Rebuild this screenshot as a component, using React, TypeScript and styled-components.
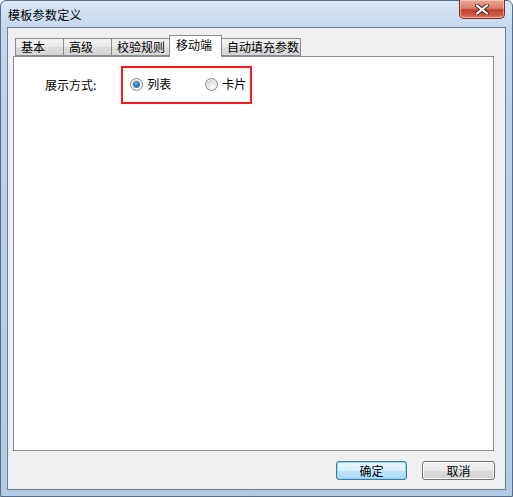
import React, { useState } from "react";
import styled, { createGlobalStyle } from "styled-components";

const GlobalStyle = createGlobalStyle`
  html, body {
    margin: 0;
    padding: 0;
    background: #ffffff;
  }
  body {
    font-family: "Noto Sans CJK SC", "Liberation Sans", sans-serif;
    font-size: 12px;
    color: #000;
  }
`;

const Window = styled.div`
  box-sizing: border-box;
  width: 513px;
  height: 497px;
  display: flex;
  flex-direction: column;
  border: 1px solid #566d89;
  border-radius: 6px 6px 0 0;
  background: linear-gradient(180deg, #dbe8f6 0px, #c4d8ee 26px, #bcd2ea 120px, #b3cbe5 100%);
`;

const TitleBar = styled.div`
  height: 26px;
  display: flex;
  justify-content: space-between;
  align-items: flex-start;
  flex-shrink: 0;
`;

const Title = styled.span`
  margin: 6px 0 0 7px;
  font-size: 12px;
  line-height: 16px;
  letter-spacing: 0.3px;
  color: #000;
`;

const CloseButton = styled.button`
  box-sizing: border-box;
  width: 46px;
  height: 19px;
  margin: -1px 7px 0 0;
  padding: 0;
  display: flex;
  align-items: center;
  justify-content: center;
  border: 1px solid #7d2d27;
  border-top: none;
  border-radius: 0 0 5px 5px;
  background: linear-gradient(180deg, #e9a898 0%, #d8806c 45%, #c2412f 55%, #d15a45 85%, #e08a6e 100%);
  box-shadow: inset 0 0 0 1px rgba(255, 220, 210, 0.5);
  cursor: default;
`;

const Client = styled.div`
  flex: 1;
  display: flex;
  flex-direction: column;
  margin: 0 6px 6px 6px;
  border: 1px solid #6c7e94;
  background: #f0f0f0;
`;

const TabStrip = styled.div`
  display: flex;
  align-items: flex-end;
  height: 22px;
  padding: 7px 0 0 7px;
  margin-bottom: -1px;
  position: relative;
  z-index: 1;
`;

const Tab = styled.div<{ $active?: boolean; $w: number }>`
  box-sizing: border-box;
  width: ${(p) => p.$w}px;
  height: ${(p) => (p.$active ? 22 : 18)}px;
  margin-bottom: ${(p) => (p.$active ? 0 : 1)}px;
  margin-left: ${(p) => (p.$active ? -1 : 0)}px;
  margin-right: ${(p) => (p.$active ? -1 : 0)}px;
  padding: ${(p) => (p.$active ? "1px 0 0 6px" : "0 0 0 5px")};
  display: flex;
  align-items: ${(p) => (p.$active ? "flex-start" : "center")};
  border: 1px solid #898c95;
  border-bottom: ${(p) => (p.$active ? "none" : "1px solid #898c95")};
  border-right: ${(p) => (p.$active ? "1px solid #898c95" : "none")};
  background: ${(p) =>
    p.$active ? "#ffffff" : "linear-gradient(180deg, #f3f3f3 0%, #ebebeb 50%, #dcdcdc 51%, #d6d6d6 100%)"};
  position: relative;
  z-index: ${(p) => (p.$active ? 2 : 1)};
  font-size: 12px;
  line-height: 16px;
  white-space: nowrap;
  &:last-child {
    border-right: 1px solid #898c95;
  }
`;

const Panel = styled.div`
  flex: 1;
  margin: 0 11px 0 5px;
  border: 1px solid #898c95;
  background: #ffffff;
`;

const Row = styled.div`
  display: flex;
  align-items: center;
  padding: 9px 0 0 31px;
`;

const FieldLabel = styled.span`
  font-size: 12px;
  line-height: 16px;
  margin-right: 25px;
`;

const Highlight = styled.div`
  box-sizing: border-box;
  height: 38px;
  display: flex;
  align-items: center;
  padding: 0 4px 2px 7px;
  border: 2px solid #ff1a1a;
  gap: 34px;
`;

const RadioItem = styled.label`
  display: flex;
  align-items: center;
  gap: 4px;
  font-size: 12px;
  line-height: 16px;
  cursor: default;
`;

const RadioDot = styled.span<{ $checked: boolean }>`
  box-sizing: border-box;
  width: 13px;
  height: 13px;
  border-radius: 50%;
  border: 1px solid #8a8a8a;
  background: radial-gradient(circle at 60% 70%, #ffffff 0%, #e4e4e4 40%, #c4c4c4 100%);
  box-shadow: inset 0 0 0 1px #f4f4f4;
  display: flex;
  align-items: center;
  justify-content: center;
  &::after {
    content: "";
    display: ${(p) => (p.$checked ? "block" : "none")};
    width: 5px;
    height: 5px;
    border-radius: 50%;
    background: radial-gradient(circle at 40% 35%, #6ec3f2 0%, #1c6fae 55%, #0d3e6b 100%);
    box-shadow: 0 0 0 1px #4a7ea8;
  }
`;

const Footer = styled.div`
  display: flex;
  justify-content: flex-end;
  gap: 15px;
  padding: 10px 10px 9px 0;
`;

const Button = styled.button<{ $default?: boolean }>`
  box-sizing: border-box;
  width: ${(p) => (p.$default ? 71 : 73)}px;
  height: 19px;
  padding: 0;
  border-radius: 3px;
  border: 1px solid ${(p) => (p.$default ? "#3d7bad" : "#707070")};
  background: ${(p) =>
    p.$default
      ? "linear-gradient(180deg, #eaf6fd 0%, #d9f0fc 50%, #bee6fd 51%, #a7d9f5 100%)"
      : "linear-gradient(180deg, #f2f2f2 0%, #ebebeb 50%, #dddddd 51%, #cfcfcf 100%)"};
  box-shadow: inset 0 0 0 1px ${(p) => (p.$default ? "#91d4f5" : "#fcfcfc")};
  font-family: "Noto Sans CJK SC", "Liberation Sans", sans-serif;
  font-size: 12px;
  line-height: 16px;
  color: #000;
  cursor: default;
`;

const tabs = [
  { label: "基本", w: 48 },
  { label: "高级", w: 48 },
  { label: "校验规则", w: 59 },
  { label: "移动端", w: 53 },
  { label: "自动填充参数", w: 80 },
];

const CloseIcon = () => (
  <svg width="14" height="11" viewBox="0 0 14 11">
    <path d="M2 1.5 L12 9.5 M12 1.5 L2 9.5" stroke="#4a1c18" strokeWidth="4" strokeLinecap="square" />
    <path d="M2 1.5 L12 9.5 M12 1.5 L2 9.5" stroke="#ffffff" strokeWidth="2.2" strokeLinecap="square" />
  </svg>
);

export default function App() {
  const [mode, setMode] = useState<"list" | "card">("list");
  const active = "移动端";

  return (
    <>
      <GlobalStyle />
      <Window>
        <TitleBar>
          <Title>模板参数定义</Title>
          <CloseButton aria-label="关闭">
            <CloseIcon />
          </CloseButton>
        </TitleBar>
        <Client>
          <TabStrip>
            {tabs.map((t) => (
              <Tab key={t.label} $w={t.w} $active={t.label === active}>
                {t.label}
              </Tab>
            ))}
          </TabStrip>
          <Panel>
            <Row>
              <FieldLabel>展示方式:</FieldLabel>
              <Highlight>
                <RadioItem onClick={() => setMode("list")}>
                  <RadioDot $checked={mode === "list"} />
                  列表
                </RadioItem>
                <RadioItem onClick={() => setMode("card")}>
                  <RadioDot $checked={mode === "card"} />
                  卡片
                </RadioItem>
              </Highlight>
            </Row>
          </Panel>
          <Footer>
            <Button $default>确定</Button>
            <Button>取消</Button>
          </Footer>
        </Client>
      </Window>
    </>
  );
}
